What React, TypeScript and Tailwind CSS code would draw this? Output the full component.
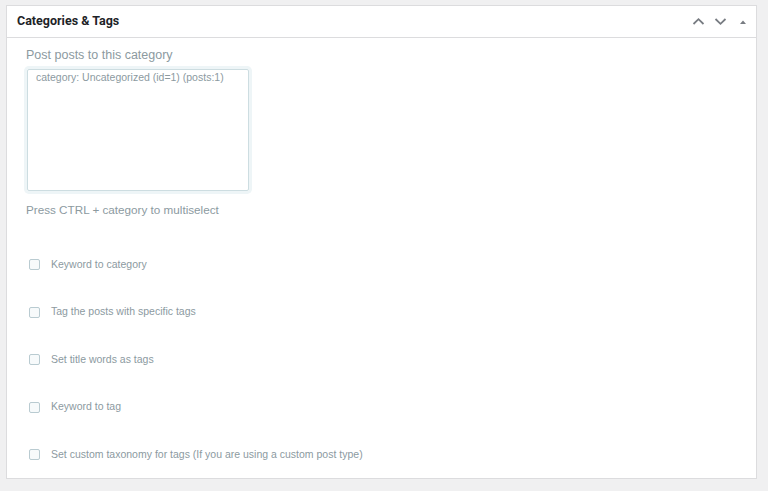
import React from 'react'

const options = [
  'Keyword to category',
  'Tag the posts with specific tags',
  'Set title words as tags',
  'Keyword to tag',
  'Set custom taxonomy for tags (If you are using a custom post type)',
]

function Chevron({ dir }: { dir: 'up' | 'down' }) {
  return (
    <svg width="13" height="9" viewBox="0 0 13 9" fill="none">
      <path
        d={dir === 'up' ? 'M1.5 7 L6.5 2.2 L11.5 7' : 'M1.5 2 L6.5 6.8 L11.5 2'}
        stroke="#787c82"
        strokeWidth="1.8"
      />
    </svg>
  )
}

export default function App() {
  return (
    <div className="w-[768px] h-[491px] bg-[#f0f0f1] pt-[5px] pl-[6px] overflow-hidden">
      <div className="w-[751px] h-[474px] bg-white border border-[#dcdcde] flex flex-col">
        {/* Header */}
        <div className="h-[32px] border-b border-[#dcdcde] flex items-center justify-between pl-[10px] pr-[8px] shrink-0">
          <h2 className="text-[12.5px] font-bold text-[#1d2327] font-['Roboto',sans-serif]">Categories &amp; Tags</h2>
          <div className="flex items-center gap-[9px]">
            <Chevron dir="up" />
            <Chevron dir="down" />
            <svg width="10" height="10" viewBox="0 0 10 10" className="ml-[2px]">
              <path d="M2 7 L5 3.5 L8 7 Z" fill="#787c82" />
            </svg>
          </div>
        </div>

        {/* Body */}
        <div className="flex flex-col pl-[19px] pt-[9px] font-['Liberation_Sans',Arial,sans-serif]">
          <p className="text-[12.5px] leading-[16px] text-[#8c9a9f]">Post posts to this category</p>
          <div className="mt-[6px] ml-[1px] w-[222px] h-[122px] border border-[#cddde1] rounded-[2px] shadow-[0_0_0_3px_#eef5f7] px-[8px]">
            <p className="text-[10.5px] leading-[14px] text-[#8c9a9f]">category: Uncategorized (id=1) (posts:1)</p>
          </div>
          <p className="mt-[11px] text-[11.7px] leading-[16px] text-[#8c9a9f]">Press CTRL + category to multiselect</p>

          <div className="mt-[23px] flex flex-col">
            {options.map((label) => (
              <label key={label} className="h-[47.5px] flex items-center gap-[11px] pl-[3px]">
                <span className="w-[11px] h-[11px] rounded-[2px] border border-[#b9cbd1] bg-[#f7fafb] shrink-0" />
                <span className="text-[10.5px] text-[#8c9a9f]">{label}</span>
              </label>
            ))}
          </div>
        </div>
      </div>
    </div>
  )
}
